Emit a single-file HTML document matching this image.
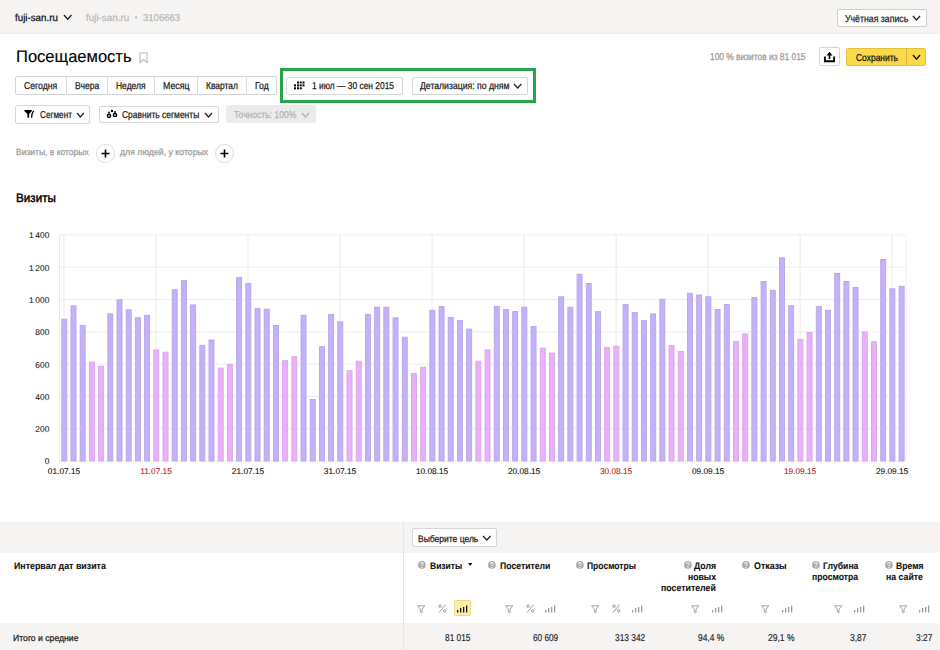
<!DOCTYPE html>
<html><head><meta charset="utf-8"><style>
html,body{margin:0;padding:0;background:#fff}
#root{position:relative;width:940px;height:650px;overflow:hidden;background:#fff;font-family:"Liberation Sans",sans-serif;text-rendering:geometricPrecision}
.t{position:absolute;white-space:nowrap;font-family:"Liberation Sans",sans-serif;transform-origin:0 0;-webkit-text-stroke:0.25px currentColor;text-rendering:geometricPrecision}
svg{display:block}
</style></head><body><div id="root">
<div style="position:absolute;left:0px;top:0px;width:940px;height:34px;background:#f5f4f2"></div>
<div style="position:absolute;left:0px;top:32.6px;width:940px;height:1.6px;background:#efeeec"></div>
<div class="t" style="left:15.30px;top:14px;font-size:10px;line-height:10px;color:#111;font-weight:normal;transform:scaleX(0.9749);">fuji-san.ru</div>
<svg style="position:absolute;left:62.7px;top:14.3px" width="9.5" height="6.3"><path d="M1 1 L4.75 5.3 L8.5 1" fill="none" stroke="#222" stroke-width="1.3299999999999998"/></svg>
<div class="t" style="left:85.60px;top:14px;font-size:10px;line-height:10px;color:#b9b9b9;font-weight:normal;transform:scaleX(0.9841);">fuji-san.ru</div>
<div style="position:absolute;left:134.8px;top:16px;width:2.6px;height:2.6px;background:#c4c4c4;border-radius:50%"></div>
<div class="t" style="left:142.70px;top:14px;font-size:10px;line-height:10px;color:#b9b9b9;font-weight:normal;transform:scaleX(0.9551);">3106663</div>
<div style="position:absolute;left:837px;top:8.5px;width:89.5px;height:18.7px;box-sizing:border-box;border:1px solid #cfcfcf;border-radius:2px;background:#fdfdfc"></div>
<div class="t" style="left:844.90px;top:15px;font-size:10px;line-height:10px;color:#222;font-weight:normal;transform:scaleX(0.8735);">Учётная запись</div>
<svg style="position:absolute;left:912px;top:14.5px" width="9" height="6"><path d="M1 1 L4.5 5 L8 1" fill="none" stroke="#222" stroke-width="1.2349999999999999"/></svg>
<div class="t" style="left:16.20px;top:49px;font-size:16.8px;line-height:16.8px;color:#000;font-weight:normal;transform:scaleX(0.9853);-webkit-text-stroke:0.12px #000">Посещаемость</div>
<svg style="position:absolute;left:139px;top:52px" width="10" height="12"><path d="M1 1 H8 V10.5 L4.5 7.5 L1 10.5 Z" fill="none" stroke="#bdbdbd" stroke-width="1.1"/></svg>
<div class="t" style="left:709.70px;top:53px;font-size:10px;line-height:10px;color:#999;font-weight:normal;transform:scaleX(0.8388);">100 % визитов из 81 015</div>
<div style="position:absolute;left:819.4px;top:47.4px;width:20.3px;height:19px;box-sizing:border-box;border:1px solid #d6d6d6;border-radius:2px;background:#fff"></div>
<svg style="position:absolute;left:822px;top:50px" width="15" height="14"><path d="M2.9 6.6 V11.2 H12.1 V6.6" fill="none" stroke="#000" stroke-width="1.9"/><path d="M7.5 4.5 V9" stroke="#000" stroke-width="1.7"/><path d="M4.5 5.4 L7.5 1.8 L10.5 5.4 Z" fill="#000"/></svg>
<div style="position:absolute;left:846.2px;top:47.8px;width:80.2px;height:18.5px;box-sizing:border-box;border:1px solid #e2c23a;border-radius:2px;background:#fbd94b"></div>
<div style="position:absolute;left:906.3px;top:48.5px;width:1px;height:17px;background:#d9b834"></div>
<div class="t" style="left:856.00px;top:54px;font-size:10px;line-height:10px;color:#111;font-weight:normal;transform:scaleX(0.8451);">Сохранить</div>
<svg style="position:absolute;left:911.7px;top:53.8px" width="9" height="6.2"><path d="M1 1 L4.5 5.2 L8 1" fill="none" stroke="#111" stroke-width="1.3299999999999998"/></svg>
<div style="position:absolute;left:15.3px;top:76px;width:262px;height:19px;box-sizing:border-box;border:1px solid #d3d3d3;border-radius:2px;background:#fff"></div>
<div style="position:absolute;left:65.6px;top:76.5px;width:1px;height:18px;background:#dcdcdc"></div>
<div style="position:absolute;left:107.0px;top:76.5px;width:1px;height:18px;background:#dcdcdc"></div>
<div style="position:absolute;left:154.0px;top:76.5px;width:1px;height:18px;background:#dcdcdc"></div>
<div style="position:absolute;left:196.9px;top:76.5px;width:1px;height:18px;background:#dcdcdc"></div>
<div style="position:absolute;left:246.0px;top:76.5px;width:1px;height:18px;background:#dcdcdc"></div>
<div class="t" style="left:23.90px;top:82px;font-size:10px;line-height:10px;color:#222;font-weight:normal;transform:scaleX(0.8657);">Сегодня</div>
<div class="t" style="left:74.70px;top:82px;font-size:10px;line-height:10px;color:#222;font-weight:normal;transform:scaleX(0.8566);">Вчера</div>
<div class="t" style="left:116.20px;top:82px;font-size:10px;line-height:10px;color:#222;font-weight:normal;transform:scaleX(0.8481);">Неделя</div>
<div class="t" style="left:163.10px;top:82px;font-size:10px;line-height:10px;color:#222;font-weight:normal;transform:scaleX(0.8756);">Месяц</div>
<div class="t" style="left:205.90px;top:82px;font-size:10px;line-height:10px;color:#222;font-weight:normal;transform:scaleX(0.8466);">Квартал</div>
<div class="t" style="left:254.70px;top:82px;font-size:10px;line-height:10px;color:#222;font-weight:normal;transform:scaleX(0.8616);">Год</div>
<div style="position:absolute;left:280px;top:68.2px;width:256px;height:35px;box-sizing:border-box;border:3.2px solid #2aa24b"></div>
<div style="position:absolute;left:285.7px;top:76.7px;width:117px;height:18.7px;box-sizing:border-box;border:1px solid #d6d6d6;border-radius:2px;background:#fff"></div>
<svg style="position:absolute;left:294px;top:81px" width="12" height="10"><rect x="3.00" y="0.50" width="2" height="2" fill="#000"/><rect x="5.70" y="0.50" width="2" height="2" fill="#000"/><rect x="8.50" y="0.50" width="2" height="2" fill="#000"/><rect x="0.00" y="3.40" width="2" height="2" fill="#000"/><rect x="3.00" y="3.40" width="2" height="2" fill="#000"/><rect x="5.70" y="3.40" width="2" height="2" fill="#000"/><rect x="8.50" y="3.40" width="2" height="2" fill="#000"/><rect x="0.00" y="6.30" width="2" height="2" fill="#000"/><rect x="3.00" y="6.30" width="2" height="2" fill="#000"/><rect x="5.80" y="6.30" width="2" height="2" fill="#000"/></svg>
<div class="t" style="left:311.70px;top:82px;font-size:10px;line-height:10px;color:#222;font-weight:normal;transform:scaleX(0.8402);">1 июл — 30 сен 2015</div>
<div style="position:absolute;left:411.6px;top:76.7px;width:116.5px;height:18.7px;box-sizing:border-box;border:1px solid #d6d6d6;border-radius:2px;background:#fff"></div>
<div class="t" style="left:420.10px;top:82px;font-size:10px;line-height:10px;color:#222;font-weight:normal;transform:scaleX(0.8654);">Детализация: по дням</div>
<svg style="position:absolute;left:513.4px;top:83.1px" width="9.4" height="6"><path d="M1 1 L4.7 5 L8.4 1" fill="none" stroke="#222" stroke-width="1.2349999999999999"/></svg>
<div style="position:absolute;left:15.4px;top:105.4px;width:75px;height:18.2px;box-sizing:border-box;border:1px solid #d6d6d6;border-radius:2px;background:#fff"></div>
<svg style="position:absolute;left:23px;top:109px" width="13" height="10"><path d="M1.3 0.9 H8.9 V1.9 L6.1 5 V8.7 H4.4 V5 L1.3 1.9 Z" fill="#000"/><path d="M10.8 2.1 Q8.7 3.8 8.7 8.7" fill="none" stroke="#000" stroke-width="1.3"/></svg>
<div class="t" style="left:40.00px;top:111px;font-size:10px;line-height:10px;color:#222;font-weight:normal;transform:scaleX(0.8190);">Сегмент</div>
<svg style="position:absolute;left:76.3px;top:111.5px" width="8.8" height="6"><path d="M1 1 L4.4 5 L7.8 1" fill="none" stroke="#222" stroke-width="1.2349999999999999"/></svg>
<div style="position:absolute;left:98.7px;top:105.7px;width:120px;height:17.7px;box-sizing:border-box;border:1px solid #d6d6d6;border-radius:2px;background:#fff"></div>
<svg style="position:absolute;left:105px;top:108px" width="14" height="11"><circle cx="4" cy="7.8" r="1.6" fill="none" stroke="#000" stroke-width="1.5"/><circle cx="4" cy="4.5" r="1" fill="#000"/><circle cx="7" cy="3" r="1.2" fill="#000"/><circle cx="10" cy="7" r="1.6" fill="none" stroke="#000" stroke-width="1.5"/><circle cx="10" cy="4" r="1" fill="#000"/></svg>
<div class="t" style="left:122.10px;top:111px;font-size:10px;line-height:10px;color:#222;font-weight:normal;transform:scaleX(0.8460);">Сравнить сегменты</div>
<svg style="position:absolute;left:203.9px;top:111.5px" width="9" height="6"><path d="M1 1 L4.5 5 L8 1" fill="none" stroke="#222" stroke-width="1.2349999999999999"/></svg>
<div style="position:absolute;left:225.9px;top:105.3px;width:89.8px;height:18.1px;border-radius:2px;background:#ebebeb"></div>
<div class="t" style="left:234.30px;top:111px;font-size:10px;line-height:10px;color:#b3b3b3;font-weight:normal;transform:scaleX(0.8560);">Точность: 100%</div>
<svg style="position:absolute;left:300.9px;top:111.5px" width="9" height="6"><path d="M1 1 L4.5 5 L8 1" fill="none" stroke="#b3b3b3" stroke-width="1.2349999999999999"/></svg>
<div class="t" style="left:15.90px;top:148px;font-size:9px;line-height:9px;color:#9a9a9a;font-weight:normal;transform:scaleX(0.9453);">Визиты, в которых</div>
<div style="position:absolute;left:96px;top:144px;width:18.5px;height:18.5px;box-sizing:border-box;border:1px solid #dedede;border-radius:50%;background:#fff"></div>
<svg style="position:absolute;left:100px;top:148px" width="11" height="11"><path d="M5.5 1.5 V9.5 M1.5 5.5 H9.5" stroke="#000" stroke-width="1.6"/></svg>
<div class="t" style="left:120.00px;top:148px;font-size:9px;line-height:9px;color:#9a9a9a;font-weight:normal;transform:scaleX(0.9713);">для людей, у которых</div>
<div style="position:absolute;left:215.1px;top:144px;width:18.5px;height:18.5px;box-sizing:border-box;border:1px solid #dedede;border-radius:50%;background:#fff"></div>
<svg style="position:absolute;left:219.3px;top:148px" width="11" height="11"><path d="M5.5 1.5 V9.5 M1.5 5.5 H9.5" stroke="#000" stroke-width="1.6"/></svg>
<div class="t" style="left:16.10px;top:192px;font-size:12.2px;line-height:12.2px;color:#000;font-weight:normal;transform:scaleX(0.9563);-webkit-text-stroke:0.45px #000">Визиты</div>
<svg style="position:absolute;left:0;top:0" width="940" height="500"><rect x="59.5" y="460.50" width="846.5" height="1" fill="#ededed"/><rect x="59.5" y="428.20" width="846.5" height="1" fill="#ededed"/><rect x="59.5" y="395.90" width="846.5" height="1" fill="#ededed"/><rect x="59.5" y="363.60" width="846.5" height="1" fill="#ededed"/><rect x="59.5" y="331.30" width="846.5" height="1" fill="#ededed"/><rect x="59.5" y="299.00" width="846.5" height="1" fill="#ededed"/><rect x="59.5" y="266.70" width="846.5" height="1" fill="#ededed"/><rect x="59.5" y="234.40" width="846.5" height="1" fill="#ededed"/><rect x="59.0" y="234.9" width="1" height="226.1" fill="#e9e9e9"/><rect x="905.5" y="234.9" width="1" height="226.1" fill="#ededed"/><rect x="63.50" y="234.9" width="1" height="226.1" fill="#ebebeb"/><rect x="155.51" y="234.9" width="1" height="226.1" fill="#ebebeb"/><rect x="247.52" y="234.9" width="1" height="226.1" fill="#ebebeb"/><rect x="339.53" y="234.9" width="1" height="226.1" fill="#ebebeb"/><rect x="431.54" y="234.9" width="1" height="226.1" fill="#ebebeb"/><rect x="523.55" y="234.9" width="1" height="226.1" fill="#ebebeb"/><rect x="615.57" y="234.9" width="1" height="226.1" fill="#ebebeb"/><rect x="707.58" y="234.9" width="1" height="226.1" fill="#ebebeb"/><rect x="799.59" y="234.9" width="1" height="226.1" fill="#ebebeb"/><rect x="891.60" y="234.9" width="1" height="226.1" fill="#ebebeb"/><rect x="61.80" y="319.20" width="5.0" height="141.80" fill="#c5b1f9" stroke="#b6a6e4" stroke-width="0.9"/><rect x="71.00" y="305.80" width="5.0" height="155.20" fill="#c5b1f9" stroke="#b6a6e4" stroke-width="0.9"/><rect x="80.20" y="325.40" width="5.0" height="135.60" fill="#c5b1f9" stroke="#b6a6e4" stroke-width="0.9"/><rect x="89.40" y="362.10" width="5.0" height="98.90" fill="#e9b1f9" stroke="#d9a6e8" stroke-width="0.9"/><rect x="98.60" y="366.10" width="5.0" height="94.90" fill="#e9b1f9" stroke="#d9a6e8" stroke-width="0.9"/><rect x="107.81" y="313.90" width="5.0" height="147.10" fill="#c5b1f9" stroke="#b6a6e4" stroke-width="0.9"/><rect x="117.01" y="299.80" width="5.0" height="161.20" fill="#c5b1f9" stroke="#b6a6e4" stroke-width="0.9"/><rect x="126.21" y="309.80" width="5.0" height="151.20" fill="#c5b1f9" stroke="#b6a6e4" stroke-width="0.9"/><rect x="135.41" y="317.80" width="5.0" height="143.20" fill="#c5b1f9" stroke="#b6a6e4" stroke-width="0.9"/><rect x="144.61" y="315.30" width="5.0" height="145.70" fill="#c5b1f9" stroke="#b6a6e4" stroke-width="0.9"/><rect x="153.81" y="349.90" width="5.0" height="111.10" fill="#e9b1f9" stroke="#d9a6e8" stroke-width="0.9"/><rect x="163.01" y="352.20" width="5.0" height="108.80" fill="#e9b1f9" stroke="#d9a6e8" stroke-width="0.9"/><rect x="172.21" y="289.70" width="5.0" height="171.30" fill="#c5b1f9" stroke="#b6a6e4" stroke-width="0.9"/><rect x="181.41" y="280.40" width="5.0" height="180.60" fill="#c5b1f9" stroke="#b6a6e4" stroke-width="0.9"/><rect x="190.62" y="304.90" width="5.0" height="156.10" fill="#c5b1f9" stroke="#b6a6e4" stroke-width="0.9"/><rect x="199.82" y="345.30" width="5.0" height="115.70" fill="#c5b1f9" stroke="#b6a6e4" stroke-width="0.9"/><rect x="209.02" y="340.00" width="5.0" height="121.00" fill="#c5b1f9" stroke="#b6a6e4" stroke-width="0.9"/><rect x="218.22" y="368.10" width="5.0" height="92.90" fill="#e9b1f9" stroke="#d9a6e8" stroke-width="0.9"/><rect x="227.42" y="364.40" width="5.0" height="96.60" fill="#e9b1f9" stroke="#d9a6e8" stroke-width="0.9"/><rect x="236.62" y="277.40" width="5.0" height="183.60" fill="#c5b1f9" stroke="#b6a6e4" stroke-width="0.9"/><rect x="245.82" y="283.40" width="5.0" height="177.60" fill="#c5b1f9" stroke="#b6a6e4" stroke-width="0.9"/><rect x="255.02" y="308.40" width="5.0" height="152.60" fill="#c5b1f9" stroke="#b6a6e4" stroke-width="0.9"/><rect x="264.22" y="309.10" width="5.0" height="151.90" fill="#c5b1f9" stroke="#b6a6e4" stroke-width="0.9"/><rect x="273.43" y="325.40" width="5.0" height="135.60" fill="#c5b1f9" stroke="#b6a6e4" stroke-width="0.9"/><rect x="282.63" y="360.70" width="5.0" height="100.30" fill="#e9b1f9" stroke="#d9a6e8" stroke-width="0.9"/><rect x="291.83" y="356.60" width="5.0" height="104.40" fill="#e9b1f9" stroke="#d9a6e8" stroke-width="0.9"/><rect x="301.03" y="315.30" width="5.0" height="145.70" fill="#c5b1f9" stroke="#b6a6e4" stroke-width="0.9"/><rect x="310.23" y="399.50" width="5.0" height="61.50" fill="#c5b1f9" stroke="#b6a6e4" stroke-width="0.9"/><rect x="319.43" y="346.70" width="5.0" height="114.30" fill="#c5b1f9" stroke="#b6a6e4" stroke-width="0.9"/><rect x="328.63" y="314.40" width="5.0" height="146.60" fill="#c5b1f9" stroke="#b6a6e4" stroke-width="0.9"/><rect x="337.83" y="321.80" width="5.0" height="139.20" fill="#c5b1f9" stroke="#b6a6e4" stroke-width="0.9"/><rect x="347.03" y="370.70" width="5.0" height="90.30" fill="#e9b1f9" stroke="#d9a6e8" stroke-width="0.9"/><rect x="356.24" y="361.20" width="5.0" height="99.80" fill="#e9b1f9" stroke="#d9a6e8" stroke-width="0.9"/><rect x="365.44" y="314.40" width="5.0" height="146.60" fill="#c5b1f9" stroke="#b6a6e4" stroke-width="0.9"/><rect x="374.64" y="307.20" width="5.0" height="153.80" fill="#c5b1f9" stroke="#b6a6e4" stroke-width="0.9"/><rect x="383.84" y="307.20" width="5.0" height="153.80" fill="#c5b1f9" stroke="#b6a6e4" stroke-width="0.9"/><rect x="393.04" y="317.80" width="5.0" height="143.20" fill="#c5b1f9" stroke="#b6a6e4" stroke-width="0.9"/><rect x="402.24" y="337.20" width="5.0" height="123.80" fill="#c5b1f9" stroke="#b6a6e4" stroke-width="0.9"/><rect x="411.44" y="373.40" width="5.0" height="87.60" fill="#e9b1f9" stroke="#d9a6e8" stroke-width="0.9"/><rect x="420.64" y="367.20" width="5.0" height="93.80" fill="#e9b1f9" stroke="#d9a6e8" stroke-width="0.9"/><rect x="429.84" y="310.20" width="5.0" height="150.80" fill="#c5b1f9" stroke="#b6a6e4" stroke-width="0.9"/><rect x="439.05" y="306.50" width="5.0" height="154.50" fill="#c5b1f9" stroke="#b6a6e4" stroke-width="0.9"/><rect x="448.25" y="317.60" width="5.0" height="143.40" fill="#c5b1f9" stroke="#b6a6e4" stroke-width="0.9"/><rect x="457.45" y="320.40" width="5.0" height="140.60" fill="#c5b1f9" stroke="#b6a6e4" stroke-width="0.9"/><rect x="466.65" y="329.10" width="5.0" height="131.90" fill="#c5b1f9" stroke="#b6a6e4" stroke-width="0.9"/><rect x="475.85" y="361.20" width="5.0" height="99.80" fill="#e9b1f9" stroke="#d9a6e8" stroke-width="0.9"/><rect x="485.05" y="349.90" width="5.0" height="111.10" fill="#e9b1f9" stroke="#d9a6e8" stroke-width="0.9"/><rect x="494.25" y="306.50" width="5.0" height="154.50" fill="#c5b1f9" stroke="#b6a6e4" stroke-width="0.9"/><rect x="503.45" y="309.50" width="5.0" height="151.50" fill="#c5b1f9" stroke="#b6a6e4" stroke-width="0.9"/><rect x="512.65" y="311.60" width="5.0" height="149.40" fill="#c5b1f9" stroke="#b6a6e4" stroke-width="0.9"/><rect x="521.85" y="307.20" width="5.0" height="153.80" fill="#c5b1f9" stroke="#b6a6e4" stroke-width="0.9"/><rect x="531.06" y="326.60" width="5.0" height="134.40" fill="#c5b1f9" stroke="#b6a6e4" stroke-width="0.9"/><rect x="540.26" y="348.10" width="5.0" height="112.90" fill="#e9b1f9" stroke="#d9a6e8" stroke-width="0.9"/><rect x="549.46" y="353.10" width="5.0" height="107.90" fill="#e9b1f9" stroke="#d9a6e8" stroke-width="0.9"/><rect x="558.66" y="296.80" width="5.0" height="164.20" fill="#c5b1f9" stroke="#b6a6e4" stroke-width="0.9"/><rect x="567.86" y="307.20" width="5.0" height="153.80" fill="#c5b1f9" stroke="#b6a6e4" stroke-width="0.9"/><rect x="577.06" y="274.20" width="5.0" height="186.80" fill="#c5b1f9" stroke="#b6a6e4" stroke-width="0.9"/><rect x="586.26" y="283.50" width="5.0" height="177.50" fill="#c5b1f9" stroke="#b6a6e4" stroke-width="0.9"/><rect x="595.46" y="311.60" width="5.0" height="149.40" fill="#c5b1f9" stroke="#b6a6e4" stroke-width="0.9"/><rect x="604.66" y="347.40" width="5.0" height="113.60" fill="#e9b1f9" stroke="#d9a6e8" stroke-width="0.9"/><rect x="613.87" y="346.20" width="5.0" height="114.80" fill="#e9b1f9" stroke="#d9a6e8" stroke-width="0.9"/><rect x="623.07" y="304.50" width="5.0" height="156.50" fill="#c5b1f9" stroke="#b6a6e4" stroke-width="0.9"/><rect x="632.27" y="312.50" width="5.0" height="148.50" fill="#c5b1f9" stroke="#b6a6e4" stroke-width="0.9"/><rect x="641.47" y="320.60" width="5.0" height="140.40" fill="#c5b1f9" stroke="#b6a6e4" stroke-width="0.9"/><rect x="650.67" y="313.90" width="5.0" height="147.10" fill="#c5b1f9" stroke="#b6a6e4" stroke-width="0.9"/><rect x="659.87" y="299.20" width="5.0" height="161.80" fill="#c5b1f9" stroke="#b6a6e4" stroke-width="0.9"/><rect x="669.07" y="345.50" width="5.0" height="115.50" fill="#e9b1f9" stroke="#d9a6e8" stroke-width="0.9"/><rect x="678.27" y="351.50" width="5.0" height="109.50" fill="#e9b1f9" stroke="#d9a6e8" stroke-width="0.9"/><rect x="687.47" y="293.20" width="5.0" height="167.80" fill="#c5b1f9" stroke="#b6a6e4" stroke-width="0.9"/><rect x="696.68" y="295.00" width="5.0" height="166.00" fill="#c5b1f9" stroke="#b6a6e4" stroke-width="0.9"/><rect x="705.88" y="296.80" width="5.0" height="164.20" fill="#c5b1f9" stroke="#b6a6e4" stroke-width="0.9"/><rect x="715.08" y="309.50" width="5.0" height="151.50" fill="#c5b1f9" stroke="#b6a6e4" stroke-width="0.9"/><rect x="724.28" y="304.50" width="5.0" height="156.50" fill="#c5b1f9" stroke="#b6a6e4" stroke-width="0.9"/><rect x="733.48" y="341.40" width="5.0" height="119.60" fill="#e9b1f9" stroke="#d9a6e8" stroke-width="0.9"/><rect x="742.68" y="333.90" width="5.0" height="127.10" fill="#e9b1f9" stroke="#d9a6e8" stroke-width="0.9"/><rect x="751.88" y="297.60" width="5.0" height="163.40" fill="#c5b1f9" stroke="#b6a6e4" stroke-width="0.9"/><rect x="761.08" y="281.50" width="5.0" height="179.50" fill="#c5b1f9" stroke="#b6a6e4" stroke-width="0.9"/><rect x="770.28" y="290.30" width="5.0" height="170.70" fill="#c5b1f9" stroke="#b6a6e4" stroke-width="0.9"/><rect x="779.49" y="257.90" width="5.0" height="203.10" fill="#c5b1f9" stroke="#b6a6e4" stroke-width="0.9"/><rect x="788.69" y="305.70" width="5.0" height="155.30" fill="#c5b1f9" stroke="#b6a6e4" stroke-width="0.9"/><rect x="797.89" y="339.40" width="5.0" height="121.60" fill="#e9b1f9" stroke="#d9a6e8" stroke-width="0.9"/><rect x="807.09" y="332.40" width="5.0" height="128.60" fill="#e9b1f9" stroke="#d9a6e8" stroke-width="0.9"/><rect x="816.29" y="306.40" width="5.0" height="154.60" fill="#c5b1f9" stroke="#b6a6e4" stroke-width="0.9"/><rect x="825.49" y="310.30" width="5.0" height="150.70" fill="#c5b1f9" stroke="#b6a6e4" stroke-width="0.9"/><rect x="834.69" y="273.40" width="5.0" height="187.60" fill="#c5b1f9" stroke="#b6a6e4" stroke-width="0.9"/><rect x="843.89" y="281.50" width="5.0" height="179.50" fill="#c5b1f9" stroke="#b6a6e4" stroke-width="0.9"/><rect x="853.09" y="287.50" width="5.0" height="173.50" fill="#c5b1f9" stroke="#b6a6e4" stroke-width="0.9"/><rect x="862.30" y="332.00" width="5.0" height="129.00" fill="#e9b1f9" stroke="#d9a6e8" stroke-width="0.9"/><rect x="871.50" y="341.70" width="5.0" height="119.30" fill="#e9b1f9" stroke="#d9a6e8" stroke-width="0.9"/><rect x="880.70" y="259.50" width="5.0" height="201.50" fill="#c5b1f9" stroke="#b6a6e4" stroke-width="0.9"/><rect x="889.90" y="288.80" width="5.0" height="172.20" fill="#c5b1f9" stroke="#b6a6e4" stroke-width="0.9"/><rect x="899.10" y="286.30" width="5.0" height="174.70" fill="#c5b1f9" stroke="#b6a6e4" stroke-width="0.9"/></svg>
<div class="t" style="right:890.7px;top:457.40px;font-size:8.4px;line-height:8.4px;color:#222;text-align:right;-webkit-text-stroke:0.1px #222">0</div>
<div class="t" style="right:890.7px;top:425.10px;font-size:8.4px;line-height:8.4px;color:#222;text-align:right;-webkit-text-stroke:0.1px #222">200</div>
<div class="t" style="right:890.7px;top:392.80px;font-size:8.4px;line-height:8.4px;color:#222;text-align:right;-webkit-text-stroke:0.1px #222">400</div>
<div class="t" style="right:890.7px;top:360.50px;font-size:8.4px;line-height:8.4px;color:#222;text-align:right;-webkit-text-stroke:0.1px #222">600</div>
<div class="t" style="right:890.7px;top:328.20px;font-size:8.4px;line-height:8.4px;color:#222;text-align:right;-webkit-text-stroke:0.1px #222">800</div>
<div class="t" style="right:890.7px;top:295.90px;font-size:8.4px;line-height:8.4px;color:#222;text-align:right;-webkit-text-stroke:0.1px #222">1&#8201;000</div>
<div class="t" style="right:890.7px;top:263.60px;font-size:8.4px;line-height:8.4px;color:#222;text-align:right;-webkit-text-stroke:0.1px #222">1&#8201;200</div>
<div class="t" style="right:890.7px;top:231.30px;font-size:8.4px;line-height:8.4px;color:#222;text-align:right;-webkit-text-stroke:0.1px #222">1&#8201;400</div>
<div class="t" style="left:44.00px;width:40px;text-align:center;top:467px;font-size:8.3px;line-height:8.3px;color:#111;-webkit-text-stroke:0.1px #111">01.07.15</div>
<div class="t" style="left:136.01px;width:40px;text-align:center;top:467px;font-size:8.3px;line-height:8.3px;color:#b01e1e;-webkit-text-stroke:0.1px #b01e1e">11.07.15</div>
<div class="t" style="left:228.02px;width:40px;text-align:center;top:467px;font-size:8.3px;line-height:8.3px;color:#111;-webkit-text-stroke:0.1px #111">21.07.15</div>
<div class="t" style="left:320.03px;width:40px;text-align:center;top:467px;font-size:8.3px;line-height:8.3px;color:#111;-webkit-text-stroke:0.1px #111">31.07.15</div>
<div class="t" style="left:412.04px;width:40px;text-align:center;top:467px;font-size:8.3px;line-height:8.3px;color:#111;-webkit-text-stroke:0.1px #111">10.08.15</div>
<div class="t" style="left:504.05px;width:40px;text-align:center;top:467px;font-size:8.3px;line-height:8.3px;color:#111;-webkit-text-stroke:0.1px #111">20.08.15</div>
<div class="t" style="left:596.07px;width:40px;text-align:center;top:467px;font-size:8.3px;line-height:8.3px;color:#b01e1e;-webkit-text-stroke:0.1px #b01e1e">30.08.15</div>
<div class="t" style="left:688.08px;width:40px;text-align:center;top:467px;font-size:8.3px;line-height:8.3px;color:#111;-webkit-text-stroke:0.1px #111">09.09.15</div>
<div class="t" style="left:780.09px;width:40px;text-align:center;top:467px;font-size:8.3px;line-height:8.3px;color:#b01e1e;-webkit-text-stroke:0.1px #b01e1e">19.09.15</div>
<div class="t" style="left:872.10px;width:40px;text-align:center;top:467px;font-size:8.3px;line-height:8.3px;color:#111;-webkit-text-stroke:0.1px #111">29.09.15</div>
<div style="position:absolute;left:0px;top:522px;width:940px;height:30.7px;background:#f6f4f2"></div>
<div style="position:absolute;left:403px;top:522px;width:1px;height:128px;background:#e6e6e6"></div>
<div style="position:absolute;left:412px;top:528.4px;width:85.4px;height:19.1px;box-sizing:border-box;border:1px solid #d6d6d6;border-radius:2px;background:#fff"></div>
<div class="t" style="left:418.40px;top:535px;font-size:9.5px;line-height:9.5px;color:#222;font-weight:normal;transform:scaleX(0.8953);">Выберите цель</div>
<svg style="position:absolute;left:482.4px;top:534.8px" width="9.6" height="6"><path d="M1 1 L4.8 5 L8.6 1" fill="none" stroke="#222" stroke-width="1.2349999999999999"/></svg>
<div class="t" style="left:13.60px;top:562px;font-size:9.5px;line-height:9.5px;color:#111;font-weight:bold;transform:scaleX(0.9297);-webkit-text-stroke:0.1px #111">Интервал дат визита</div>
<div style="position:absolute;left:0px;top:622.8px;width:940px;height:27.2px;background:#f6f4f2"></div>
<div style="position:absolute;left:403px;top:622.8px;width:1px;height:27.2px;background:#e6e6e6"></div>
<div class="t" style="left:12.80px;top:634px;font-size:8.8px;line-height:8.8px;color:#222;font-weight:normal;transform:scaleX(0.9826);">Итого и средние</div>
<svg style="position:absolute;left:418.4px;top:561.2px" width="8" height="8"><circle cx="3.9" cy="3.9" r="3.85" fill="#ababab"/><path d="M2.5 3 Q2.5 1.5 3.9 1.5 Q5.3 1.5 5.3 2.8 Q5.3 3.6 4.4 4.1 Q3.9 4.4 3.9 5" fill="none" stroke="#fff" stroke-width="1"/><circle cx="3.9" cy="6.2" r="0.6" fill="#fff"/></svg>
<div class="t" style="left:430.10px;top:562px;font-size:9.5px;line-height:9.5px;color:#111;font-weight:bold;transform:scaleX(0.8931);-webkit-text-stroke:0.1px #111">Визиты</div>
<svg style="position:absolute;left:467.8px;top:563.4px" width="5" height="4"><path d="M0 0 H4.4 L2.2 3 Z" fill="#111"/></svg>
<svg style="position:absolute;left:488.2px;top:561.2px" width="8" height="8"><circle cx="3.9" cy="3.9" r="3.85" fill="#ababab"/><path d="M2.5 3 Q2.5 1.5 3.9 1.5 Q5.3 1.5 5.3 2.8 Q5.3 3.6 4.4 4.1 Q3.9 4.4 3.9 5" fill="none" stroke="#fff" stroke-width="1"/><circle cx="3.9" cy="6.2" r="0.6" fill="#fff"/></svg>
<div class="t" style="left:499.90px;top:562px;font-size:9.5px;line-height:9.5px;color:#111;font-weight:bold;transform:scaleX(0.9105);-webkit-text-stroke:0.1px #111">Посетители</div>
<svg style="position:absolute;left:576.2px;top:561.2px" width="8" height="8"><circle cx="3.9" cy="3.9" r="3.85" fill="#ababab"/><path d="M2.5 3 Q2.5 1.5 3.9 1.5 Q5.3 1.5 5.3 2.8 Q5.3 3.6 4.4 4.1 Q3.9 4.4 3.9 5" fill="none" stroke="#fff" stroke-width="1"/><circle cx="3.9" cy="6.2" r="0.6" fill="#fff"/></svg>
<div class="t" style="left:587.20px;top:562px;font-size:9.5px;line-height:9.5px;color:#111;font-weight:bold;transform:scaleX(0.8970);-webkit-text-stroke:0.1px #111">Просмотры</div>
<svg style="position:absolute;left:683.5px;top:561.2px" width="8" height="8"><circle cx="3.9" cy="3.9" r="3.85" fill="#ababab"/><path d="M2.5 3 Q2.5 1.5 3.9 1.5 Q5.3 1.5 5.3 2.8 Q5.3 3.6 4.4 4.1 Q3.9 4.4 3.9 5" fill="none" stroke="#fff" stroke-width="1"/><circle cx="3.9" cy="6.2" r="0.6" fill="#fff"/></svg>
<div class="t" style="left:694.00px;top:562px;font-size:9.5px;line-height:9.5px;color:#111;font-weight:bold;transform:scaleX(0.9195);-webkit-text-stroke:0.1px #111">Доля</div>
<div class="t" style="left:688.00px;top:573px;font-size:9.5px;line-height:9.5px;color:#111;font-weight:bold;transform:scaleX(0.9129);-webkit-text-stroke:0.1px #111">новых</div>
<div class="t" style="left:661.30px;top:584px;font-size:9.5px;line-height:9.5px;color:#111;font-weight:bold;transform:scaleX(0.9237);-webkit-text-stroke:0.1px #111">посетителей</div>
<svg style="position:absolute;left:742.2px;top:561.2px" width="8" height="8"><circle cx="3.9" cy="3.9" r="3.85" fill="#ababab"/><path d="M2.5 3 Q2.5 1.5 3.9 1.5 Q5.3 1.5 5.3 2.8 Q5.3 3.6 4.4 4.1 Q3.9 4.4 3.9 5" fill="none" stroke="#fff" stroke-width="1"/><circle cx="3.9" cy="6.2" r="0.6" fill="#fff"/></svg>
<div class="t" style="left:753.50px;top:562px;font-size:9.5px;line-height:9.5px;color:#111;font-weight:bold;transform:scaleX(0.9328);-webkit-text-stroke:0.1px #111">Отказы</div>
<svg style="position:absolute;left:812px;top:561.2px" width="8" height="8"><circle cx="3.9" cy="3.9" r="3.85" fill="#ababab"/><path d="M2.5 3 Q2.5 1.5 3.9 1.5 Q5.3 1.5 5.3 2.8 Q5.3 3.6 4.4 4.1 Q3.9 4.4 3.9 5" fill="none" stroke="#fff" stroke-width="1"/><circle cx="3.9" cy="6.2" r="0.6" fill="#fff"/></svg>
<div class="t" style="left:823.00px;top:562px;font-size:9.5px;line-height:9.5px;color:#111;font-weight:bold;transform:scaleX(0.9125);-webkit-text-stroke:0.1px #111">Глубина</div>
<div class="t" style="left:812.40px;top:573px;font-size:9.5px;line-height:9.5px;color:#111;font-weight:bold;transform:scaleX(0.9079);-webkit-text-stroke:0.1px #111">просмотра</div>
<svg style="position:absolute;left:884.5px;top:561.2px" width="8" height="8"><circle cx="3.9" cy="3.9" r="3.85" fill="#ababab"/><path d="M2.5 3 Q2.5 1.5 3.9 1.5 Q5.3 1.5 5.3 2.8 Q5.3 3.6 4.4 4.1 Q3.9 4.4 3.9 5" fill="none" stroke="#fff" stroke-width="1"/><circle cx="3.9" cy="6.2" r="0.6" fill="#fff"/></svg>
<div class="t" style="left:895.50px;top:562px;font-size:9.5px;line-height:9.5px;color:#111;font-weight:bold;transform:scaleX(0.9079);-webkit-text-stroke:0.1px #111">Время</div>
<div class="t" style="left:886.20px;top:573px;font-size:9.5px;line-height:9.5px;color:#111;font-weight:bold;transform:scaleX(0.9193);-webkit-text-stroke:0.1px #111">на сайте</div>
<svg style="position:absolute;left:416.6px;top:604.8px" width="9" height="9"><path d="M0.6 0.8 H7.8 L5 4.2 V8 L3.4 7 V4.2 Z" fill="none" stroke="#9a9a9a" stroke-width="0.9"/></svg>
<svg style="position:absolute;left:437.7px;top:603.8px" width="9" height="9"><circle cx="2" cy="2.2" r="1.25" fill="none" stroke="#999" stroke-width="1"/><circle cx="6.6" cy="6.8" r="1.25" fill="none" stroke="#999" stroke-width="1"/><path d="M7.6 0.6 L1 8.4" stroke="#999" stroke-width="1"/></svg>
<div style="position:absolute;left:454px;top:600.1px;width:17.4px;height:16.2px;box-sizing:border-box;border:1px solid #ecd886;border-radius:2px;background:#fbeeaa"></div>
<svg style="position:absolute;left:457.4px;top:605px" width="11" height="8"><rect x="0" y="5" width="1.3" height="2.5" fill="#111"/><rect x="3" y="3" width="1.3" height="4.5" fill="#111"/><rect x="6" y="2" width="1.3" height="5.5" fill="#111"/><rect x="9" y="0.5" width="1.3" height="7" fill="#111"/></svg>
<svg style="position:absolute;left:504.6px;top:604.8px" width="9" height="9"><path d="M0.6 0.8 H7.8 L5 4.2 V8 L3.4 7 V4.2 Z" fill="none" stroke="#9a9a9a" stroke-width="0.9"/></svg>
<svg style="position:absolute;left:525.9px;top:603.8px" width="9" height="9"><circle cx="2" cy="2.2" r="1.25" fill="none" stroke="#999" stroke-width="1"/><circle cx="6.6" cy="6.8" r="1.25" fill="none" stroke="#999" stroke-width="1"/><path d="M7.6 0.6 L1 8.4" stroke="#999" stroke-width="1"/></svg>
<svg style="position:absolute;left:545.4px;top:605px" width="11" height="8"><rect x="0" y="5" width="1.3" height="2.5" fill="#9a9a9a"/><rect x="3" y="3" width="1.3" height="4.5" fill="#9a9a9a"/><rect x="6" y="2" width="1.3" height="5.5" fill="#9a9a9a"/><rect x="9" y="0.5" width="1.3" height="7" fill="#9a9a9a"/></svg>
<svg style="position:absolute;left:590.9px;top:604.8px" width="9" height="9"><path d="M0.6 0.8 H7.8 L5 4.2 V8 L3.4 7 V4.2 Z" fill="none" stroke="#9a9a9a" stroke-width="0.9"/></svg>
<svg style="position:absolute;left:611.9px;top:603.8px" width="9" height="9"><circle cx="2" cy="2.2" r="1.25" fill="none" stroke="#999" stroke-width="1"/><circle cx="6.6" cy="6.8" r="1.25" fill="none" stroke="#999" stroke-width="1"/><path d="M7.6 0.6 L1 8.4" stroke="#999" stroke-width="1"/></svg>
<svg style="position:absolute;left:632px;top:605px" width="11" height="8"><rect x="0" y="5" width="1.3" height="2.5" fill="#9a9a9a"/><rect x="3" y="3" width="1.3" height="4.5" fill="#9a9a9a"/><rect x="6" y="2" width="1.3" height="5.5" fill="#9a9a9a"/><rect x="9" y="0.5" width="1.3" height="7" fill="#9a9a9a"/></svg>
<svg style="position:absolute;left:691.4px;top:604.8px" width="9" height="9"><path d="M0.6 0.8 H7.8 L5 4.2 V8 L3.4 7 V4.2 Z" fill="none" stroke="#9a9a9a" stroke-width="0.9"/></svg>
<svg style="position:absolute;left:711.5px;top:605px" width="11" height="8"><rect x="0" y="5" width="1.3" height="2.5" fill="#9a9a9a"/><rect x="3" y="3" width="1.3" height="4.5" fill="#9a9a9a"/><rect x="6" y="2" width="1.3" height="5.5" fill="#9a9a9a"/><rect x="9" y="0.5" width="1.3" height="7" fill="#9a9a9a"/></svg>
<svg style="position:absolute;left:761.3px;top:604.8px" width="9" height="9"><path d="M0.6 0.8 H7.8 L5 4.2 V8 L3.4 7 V4.2 Z" fill="none" stroke="#9a9a9a" stroke-width="0.9"/></svg>
<svg style="position:absolute;left:781.5px;top:605px" width="11" height="8"><rect x="0" y="5" width="1.3" height="2.5" fill="#9a9a9a"/><rect x="3" y="3" width="1.3" height="4.5" fill="#9a9a9a"/><rect x="6" y="2" width="1.3" height="5.5" fill="#9a9a9a"/><rect x="9" y="0.5" width="1.3" height="7" fill="#9a9a9a"/></svg>
<svg style="position:absolute;left:833.6px;top:604.8px" width="9" height="9"><path d="M0.6 0.8 H7.8 L5 4.2 V8 L3.4 7 V4.2 Z" fill="none" stroke="#9a9a9a" stroke-width="0.9"/></svg>
<svg style="position:absolute;left:853.8px;top:605px" width="11" height="8"><rect x="0" y="5" width="1.3" height="2.5" fill="#9a9a9a"/><rect x="3" y="3" width="1.3" height="4.5" fill="#9a9a9a"/><rect x="6" y="2" width="1.3" height="5.5" fill="#9a9a9a"/><rect x="9" y="0.5" width="1.3" height="7" fill="#9a9a9a"/></svg>
<svg style="position:absolute;left:899.1px;top:604.8px" width="9" height="9"><path d="M0.6 0.8 H7.8 L5 4.2 V8 L3.4 7 V4.2 Z" fill="none" stroke="#9a9a9a" stroke-width="0.9"/></svg>
<svg style="position:absolute;left:918.7px;top:605px" width="11" height="8"><rect x="0" y="5" width="1.3" height="2.5" fill="#9a9a9a"/><rect x="3" y="3" width="1.3" height="4.5" fill="#9a9a9a"/><rect x="6" y="2" width="1.3" height="5.5" fill="#9a9a9a"/><rect x="9" y="0.5" width="1.3" height="7" fill="#9a9a9a"/></svg>
<div class="t" style="left:445.00px;top:634px;font-size:10px;line-height:10px;color:#222;font-weight:normal;transform:scaleX(0.8333);-webkit-text-stroke:0.15px #222">81 015</div>
<div class="t" style="left:533.00px;top:634px;font-size:10px;line-height:10px;color:#222;font-weight:normal;transform:scaleX(0.8235);-webkit-text-stroke:0.15px #222">60 609</div>
<div class="t" style="left:614.80px;top:634px;font-size:10px;line-height:10px;color:#222;font-weight:normal;transform:scaleX(0.8354);-webkit-text-stroke:0.15px #222">313 342</div>
<div class="t" style="left:698.10px;top:634px;font-size:10px;line-height:10px;color:#222;font-weight:normal;transform:scaleX(0.8411);-webkit-text-stroke:0.15px #222">94,4 %</div>
<div class="t" style="left:767.70px;top:634px;font-size:10px;line-height:10px;color:#222;font-weight:normal;transform:scaleX(0.8539);-webkit-text-stroke:0.15px #222">29,1 %</div>
<div class="t" style="left:850.20px;top:634px;font-size:10px;line-height:10px;color:#222;font-weight:normal;transform:scaleX(0.8432);-webkit-text-stroke:0.15px #222">3,87</div>
<div class="t" style="left:915.50px;top:634px;font-size:10px;line-height:10px;color:#222;font-weight:normal;transform:scaleX(0.8432);-webkit-text-stroke:0.15px #222">3:27</div>
</div></body></html>
